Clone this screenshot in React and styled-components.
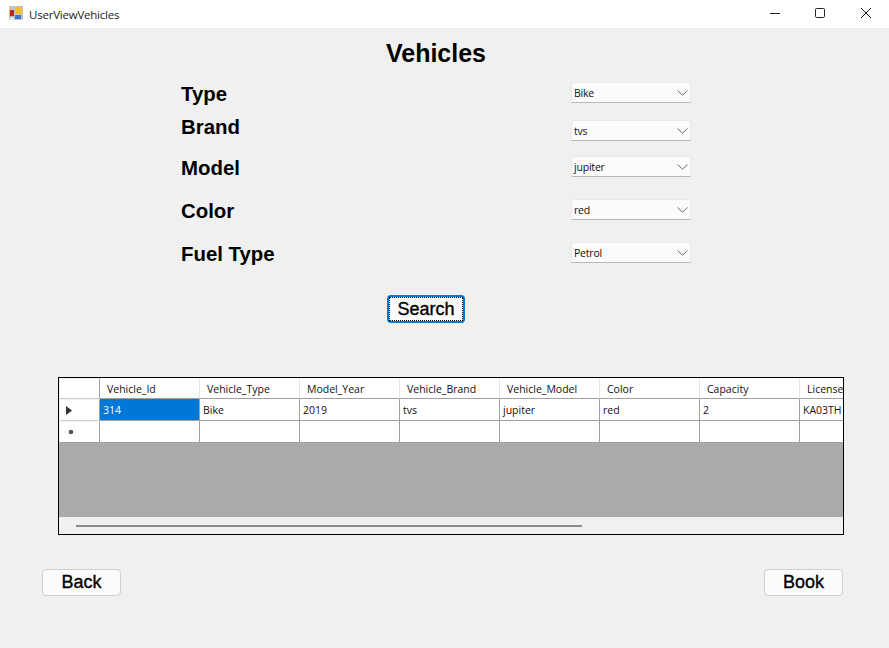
import React from "react";
import styled, { createGlobalStyle } from "styled-components";

const Global = createGlobalStyle`
  html, body { margin: 0; padding: 0; background: #f0f0f0; }
  body { font-family: "Liberation Sans", Arial, sans-serif; }
`;
const Window = styled.div`
  width: 889px; height: 648px; background: #f0f0f0; overflow: hidden;
  display: flex; flex-direction: column;
`;
const TitleBar = styled.div`
  height: 28px; background: #fff; display: flex; align-items: center; padding-left: 9px;
`;
const AppIcon = styled.svg`width: 14px; height: 14px; margin: -2px 6px 0 0; flex: none;`;
const TitleText = styled.span`
  font-family: "Open Sans", sans-serif; font-size: 11.5px; letter-spacing: -0.22px; color: #1a1a1a; flex: 1;
`;
const WinBtn = styled.svg`width: 46px; height: 28px; flex: none; align-self: flex-start;`;
const Heading = styled.h1`
  margin: 12px 0 0; height: 26px; line-height: 26px; width: 872px; text-align: center; font-size: 25px; font-weight: bold; color: #000;
`;
const Form = styled.div`
  display: flex; margin-top: 16px; padding-left: 181px; height: 181px;
`;
const Labels = styled.div`display: flex; flex-direction: column; width: 390px;`;
const Label = styled.div`
  height: 24px; line-height: 24px; font-size: 20.4px; font-weight: bold; color: #000; margin-top: ${p => p.$gap}px;
`;
const Selects = styled.div`display: flex; flex-direction: column;`;
const Select = styled.div`
  width: 120px; height: 21px; box-sizing: border-box; margin-top: ${p => p.$gap}px;
  background: #fbfbfb; border: 1px solid #e9e9e9; border-bottom: 1px solid #b9b9b9;
  display: flex; align-items: center; justify-content: space-between;
  padding: 0 2px 0 2px; font-family: "Open Sans", sans-serif; font-size: 10.5px; letter-spacing: -0.2px; color: #111;
`;
const Chevron = styled.svg`width: 11px; height: 6px; margin-right: 0;`;
const SearchRow = styled.div`display: flex; padding-left: 387px; margin-top: 32px;`;
const Button = styled.div`
  box-sizing: border-box; display: flex; align-items: center; justify-content: center;
  font-size: 18px; color: #000; background: #fbfbfb; -webkit-text-stroke: 0.35px #000;
  width: ${p => p.$w}px; height: ${p => p.$h}px; border-radius: 4px;
  border: ${p => p.$focus ? "2px solid #0078d4" : "1px solid #d0d0d0"};
`;
const FocusRing = styled.span`
  display: flex; align-items: center; justify-content: center; width: 100%; height: 100%; box-sizing: border-box;
  border: 1px dotted #000;
`;
const GridBox = styled.div`
  margin: 54px 0 0 58px; width: 786px; height: 158px; box-sizing: border-box; border: 1px solid #000;
  background: #ababab; display: flex; flex-direction: column; overflow: hidden;
`;
const Row = styled.div`
  display: flex; height: ${p => p.$h}px; flex: none; background: #fff; width: max-content;
`;
const Cell = styled.div`
  box-sizing: border-box; width: ${p => p.$w || 100}px; height: 100%; flex: none;
  border-right: 1px solid #a0a0a0; border-bottom: 1px solid #a0a0a0;
  background: ${p => p.$sel ? "#0078d7" : "#fff"}; color: ${p => p.$sel ? "#fff" : "#111"};
  font-family: "Open Sans", sans-serif; font-size: 10.5px; letter-spacing: 0; white-space: nowrap;
  display: flex; align-items: center; padding-left: 3px; padding-top: 1px;
`;
const HeadCell = styled(Cell)`padding-left: 7px; border-right-color: #e3e3e3; border-bottom-color: #a0a0a0;`;
const RowHead = styled.div`
  box-sizing: border-box; width: 41px; height: 100%; flex: none; background: #fff; border: 1px solid #f0f0f0;
  border-right: 1px solid #a0a0a0; border-bottom: 1px solid ${p => p.$last ? "#a0a0a0" : "#d0d0d0"};
  display: flex; align-items: center; padding-left: ${p => p.$pad}px;
`;
const Spacer = styled.div`flex: 1; background: #ababab;`;
const ScrollTrack = styled.div`
  height: 17px; flex: none; background: #f0f0f0; display: flex; align-items: center; padding-left: 17px;
`;
const Thumb = styled.div`width: 506px; height: 2px; background: #8a8a8a; margin-top: 1px;`;
const Footer = styled.div`
  display: flex; justify-content: space-between; margin: 34px 46px 0 42px;
`;

const cols = ["Vehicle_Id","Vehicle_Type","Model_Year","Vehicle_Brand","Vehicle_Model","Color","Capacity","License"];
const vals = ["314","Bike","2019","tvs","jupiter","red","2","KA03TH"];

const Chev = () => (
  <Chevron viewBox="0 0 11 6"><path d="M0.5 0.5L5.5 5.2L10.5 0.5" fill="none" stroke="#6a6a6a" strokeWidth="1" /></Chevron>
);

export default function App() {
  return (
    <Window>
      <Global />
      <TitleBar>
        <AppIcon viewBox="0 0 14 14">
          <rect x="0" y="0" width="14" height="14" fill="#c4c4c4" />
          <rect x="1" y="12" width="4" height="1.5" fill="#fff" />
          <rect x="6" y="1" width="7" height="7" fill="#f5c030" />
          <rect x="1" y="4" width="4" height="6" fill="#c02818" />
          <rect x="6" y="9" width="6" height="4" fill="#3a78d8" />
        </AppIcon>
        <TitleText>UserViewVehicles</TitleText>
        <WinBtn viewBox="0 0 46 28"><path d="M19 13.5H29" stroke="#222" strokeWidth="1" /></WinBtn>
        <WinBtn viewBox="0 0 46 28"><rect x="18.5" y="8.5" width="9" height="9" rx="1.2" fill="none" stroke="#222" strokeWidth="1" /></WinBtn>
        <WinBtn viewBox="0 0 46 28"><path d="M18 8L28 18M28 8L18 18" stroke="#222" strokeWidth="1" /></WinBtn>
      </TitleBar>
      <Heading>Vehicles</Heading>
      <Form>
        <Labels>
          <Label $gap={0}>Type</Label>
          <Label $gap={9}>Brand</Label>
          <Label $gap={17}>Model</Label>
          <Label $gap={19}>Color</Label>
          <Label $gap={19}>Fuel Type</Label>
        </Labels>
        <Selects>
          <Select $gap={0}>Bike<Chev /></Select>
          <Select $gap={17}>tvs<Chev /></Select>
          <Select $gap={15}>jupiter<Chev /></Select>
          <Select $gap={22}>red<Chev /></Select>
          <Select $gap={22}>Petrol<Chev /></Select>
        </Selects>
      </Form>
      <SearchRow>
        <Button $w={78} $h={28} $focus><FocusRing>Search</FocusRing></Button>
      </SearchRow>
      <GridBox>
        <Row $h={21}>
          <RowHead />
          {cols.map(c => <HeadCell key={c} $w={100}>{c}</HeadCell>)}
        </Row>
        <Row $h={22}>
          <RowHead $pad={6}>
            <svg width="6" height="9" viewBox="0 0 6 9"><path d="M0 0L6 4.5L0 9Z" fill="#333" /></svg>
          </RowHead>
          {vals.map((v, i) => <Cell key={i} $sel={i === 0}>{v}</Cell>)}
        </Row>
        <Row $h={22}>
          <RowHead $last $pad={8}>
            <svg width="6" height="6" viewBox="0 0 6 6"><circle cx="3" cy="3" r="2.3" fill="#555" /></svg>
          </RowHead>
          {vals.map((_, i) => <Cell key={i} />)}
        </Row>
        <Spacer />
        <ScrollTrack><Thumb /></ScrollTrack>
      </GridBox>
      <Footer>
        <Button $w={79} $h={27}>Back</Button>
        <Button $w={79} $h={27}>Book</Button>
      </Footer>
    </Window>
  );
}
